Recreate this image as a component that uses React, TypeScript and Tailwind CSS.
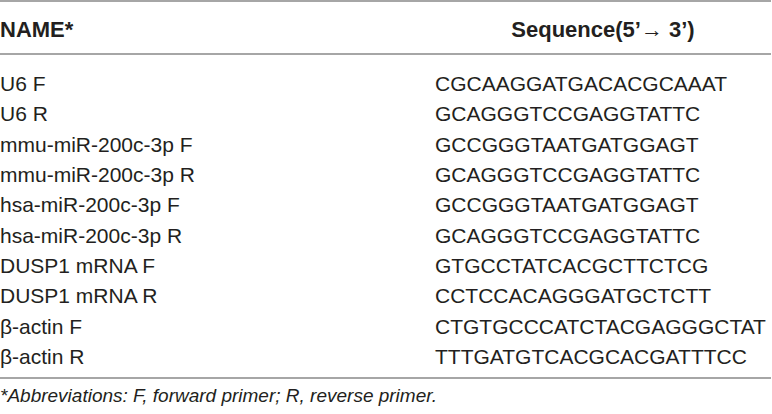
import React from "react";

const rows: [string, string][] = [
  ["U6 F", "CGCAAGGATGACACGCAAAT"],
  ["U6 R", "GCAGGGTCCGAGGTATTC"],
  ["mmu-miR-200c-3p F", "GCCGGGTAATGATGGAGT"],
  ["mmu-miR-200c-3p R", "GCAGGGTCCGAGGTATTC"],
  ["hsa-miR-200c-3p F", "GCCGGGTAATGATGGAGT"],
  ["hsa-miR-200c-3p R", "GCAGGGTCCGAGGTATTC"],
  ["DUSP1 mRNA F", "GTGCCTATCACGCTTCTCG"],
  ["DUSP1 mRNA R", "CCTCCACAGGGATGCTCTT"],
  ["β-actin F", "CTGTGCCCATCTACGAGGGCTAT"],
  ["β-actin R", "TTTGATGTCACGCACGATTTCC"],
];

export default function App() {
  return (
    <div
      className="w-[772px] h-[414px] bg-white text-[#231f20] overflow-hidden"
      style={{ fontFamily: '"Liberation Sans", Arial, sans-serif' }}
    >
      <div className="w-[771px] border-t-2 border-[#a6a6a6]">
        <div className="grid grid-cols-[435px_1fr] h-[53px] pt-[3px] items-center font-bold text-[22px] border-b-2 border-[#a6a6a6]">
          <div>NAME*</div>
          <div className="text-center">Sequence(5’→ 3’)</div>
        </div>
        <div className="pt-[13px] pb-[6px] border-b-2 border-[#a6a6a6]">
          {rows.map(([n, s]) => (
            <div key={n} className="grid grid-cols-[435px_1fr] h-[30.33px] items-center text-[21px]">
              <div>{n}</div>
              <div>{s}</div>
            </div>
          ))}
        </div>
      </div>
      <div className="h-[34px] flex items-center italic text-[19px]">
        *Abbreviations: F, forward primer; R, reverse primer.
      </div>
    </div>
  );
}
